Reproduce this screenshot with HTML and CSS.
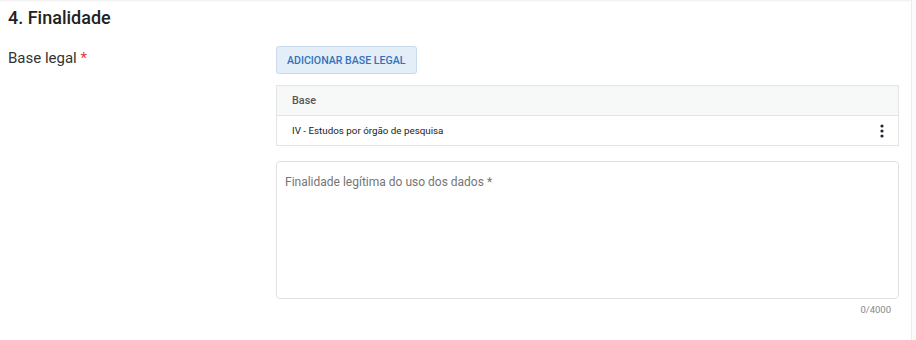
FILE: index.html
```html
<!DOCTYPE html>
<html>
  <head>
    <title>Finalidade</title>
    <link rel="stylesheet" href="styles.css">
  </head>
  <body>
    <div class="page">
      <main class="section">
        <h2 class="section__title">4. Finalidade</h2>

        <div class="field">
          <label class="field__label">Base legal <span class="field__required">*</span></label>

          <div class="field__body">
            <button type="button" class="btn-add">Adicionar base legal</button>

            <table class="bases">
              <thead>
                <tr><th>Base</th><th class="bases__actions"></th></tr>
              </thead>
              <tbody>
                <tr>
                  <td>IV - Estudos por órgão de pesquisa</td>
                  <td class="bases__actions">
                    <svg class="kebab" width="4" height="14" viewBox="0 0 4 14">
                      <circle cx="2" cy="2" r="1.6"/>
                      <circle cx="2" cy="7" r="1.6"/>
                      <circle cx="2" cy="12" r="1.6"/>
                    </svg>
                  </td>
                </tr>
              </tbody>
            </table>

            <div class="textarea">
              <textarea id="finalidade" placeholder="Finalidade legítima do uso dos dados *"></textarea>
            </div>
            <div class="counter">0/4000</div>
          </div>
        </div>
      </main>
      <aside class="scroll-rail"></aside>
    </div>
  </body>
</html>
```

FILE: styles.css
```css
html, body { margin: 0; height: 100%; background: #fff; }
body { font-family: Roboto, "Noto Sans", Arial, sans-serif; color: #222; }

.page { display: flex; height: 100%; }

.section {
  flex: 1;
  padding: 6px 12px 0 8px;
  box-shadow: inset 0 2px 2px -1px rgba(0, 0, 0, 0.07);
}
.scroll-rail {
  width: 4px;
  border-left: 1px solid #ececec;
  background: #fafafa;
}

.section__title {
  margin: 0;
  font-size: 18px;
  line-height: 24px;
  font-weight: 500;
  color: #222;
}

.field {
  display: grid;
  grid-template-columns: 268px 1fr;
  margin-top: 16px;
}
.field__label {
  font-size: 15px;
  line-height: 20px;
  color: #333;
  padding-top: 2px;
}
.field__required { color: #e53935; }

.btn-add {
  display: block;
  height: 28px;
  padding: 0 10px;
  border: 1px solid #c9dbec;
  border-radius: 3px;
  background: #e3eef9;
  color: #3372b8;
  font-family: inherit;
  font-size: 10.6px;
  font-weight: 500;
  text-transform: uppercase;
}

.bases {
  width: 100%;
  margin-top: 11px;
  border-collapse: collapse;
  border: 1px solid #e4e4e4;
  font-size: 9.8px;
}
.bases th, .bases td {
  height: 29px;
  padding: 0 15px;
  text-align: left;
}
.bases th {
  background: #f7f8f8;
  color: #555;
  font-size: 10.8px;
  font-weight: 500;
  border-bottom: 1px solid #e4e4e4;
}
.bases td { color: #222; }
.bases__actions { width: 10px; text-align: right; }
.bases td.bases__actions { padding-right: 14px; }
.kebab { display: block; margin-left: auto; fill: #1f2733; }

.textarea {
  margin-top: 15px;
  height: 136px;
  border: 1px solid #e2e2e2;
  border-radius: 4px;
}
.textarea textarea {
  display: block;
  box-sizing: border-box;
  width: 100%;
  height: 100%;
  padding: 13px 8px;
  border: 0;
  background: transparent;
  resize: none;
  font-family: inherit;
  font-size: 12px;
  outline: none;
}
.textarea textarea::placeholder { color: #757575; }

.counter {
  margin-top: 5px;
  padding-right: 8px;
  text-align: right;
  font-size: 9.5px;
  color: #888;
}
```
